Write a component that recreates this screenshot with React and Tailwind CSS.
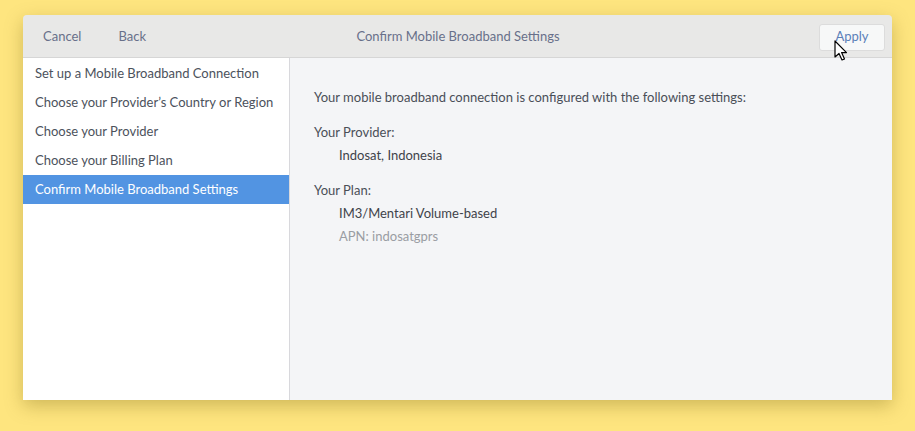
import React from 'react';

const steps = [
  'Set up a Mobile Broadband Connection',
  "Choose your Provider\u2019s Country or Region",
  'Choose your Provider',
  'Choose your Billing Plan',
  'Confirm Mobile Broadband Settings',
];

function Cursor() {
  return (
    <svg className="absolute left-[834px] top-[40px]" width="14" height="22" viewBox="0 0 14 22">
      <path d="M1 1 L1 17 L5 13.5 L8 20 L10.5 19 L7.6 12.6 L12.5 12.6 Z" fill="#fff" stroke="#000" strokeWidth="1.2" strokeLinejoin="round" />
    </svg>
  );
}

export default function App() {
  return (
    <div className="relative w-[915px] h-[431px] bg-[#fee57f] pt-[15px] pl-[23px] font-['Lato','Open_Sans',sans-serif] text-[13px]">
      <div className="w-[869px] h-[385px] flex flex-col rounded-t-[4px] overflow-hidden shadow-[0_6px_18px_rgba(120,100,20,0.35)]">
        <div className="h-[43px] shrink-0 grid grid-cols-[1fr_auto_1fr] items-center bg-[#e8e8e7] border-b border-[#d6d6d6] pl-[8px] pr-[7px] pt-[2px] text-[#68708a]">
          <div className="flex">
            <button className="px-[12px] h-[27px]">Cancel</button>
            <button className="ml-[13px] px-[12px] h-[27px]">Back</button>
          </div>
          <div className="text-center">Confirm Mobile Broadband Settings</div>
          <div className="flex justify-end">
            <button className="w-[66px] h-[27px] rounded-[3px] bg-[#f7f8f8] border border-[#dcdcdc] text-[#5b7fb8]">Apply</button>
          </div>
        </div>
        <div className="flex flex-1 min-h-0">
          <div className="w-[267px] shrink-0 bg-white border-r border-[#d8d8dc] pt-[1px] text-[#4c525c]">
            {steps.map((s, i) => (
              <div
                key={s}
                className={i === 4 ? 'h-[29px] flex items-center pl-[12px] bg-[#5294e2] text-white' : 'h-[29px] flex items-center pl-[12px]'}
              >
                {s}
              </div>
            ))}
          </div>
          <div className="flex-1 bg-[#f4f5f7] pl-[24px] pt-[29px] text-[#4a4f57]">
            <div className="h-[20px] leading-[20px]">Your mobile broadband connection is configured with the following settings:</div>
            <div className="mt-[15px] h-[20px] leading-[20px]">Your Provider:</div>
            <div className="mt-[3px] pl-[25px] h-[20px] leading-[20px] text-[#3f434a]">Indosat, Indonesia</div>
            <div className="mt-[15px] h-[20px] leading-[20px]">Your Plan:</div>
            <div className="mt-[3px] pl-[25px] h-[20px] leading-[20px] text-[#3f434a]">IM3/Mentari Volume-based</div>
            <div className="mt-[3px] pl-[25px] h-[20px] leading-[20px] text-[#9a9da3]">APN: indosatgprs</div>
          </div>
        </div>
      </div>
      <Cursor />
    </div>
  );
}
